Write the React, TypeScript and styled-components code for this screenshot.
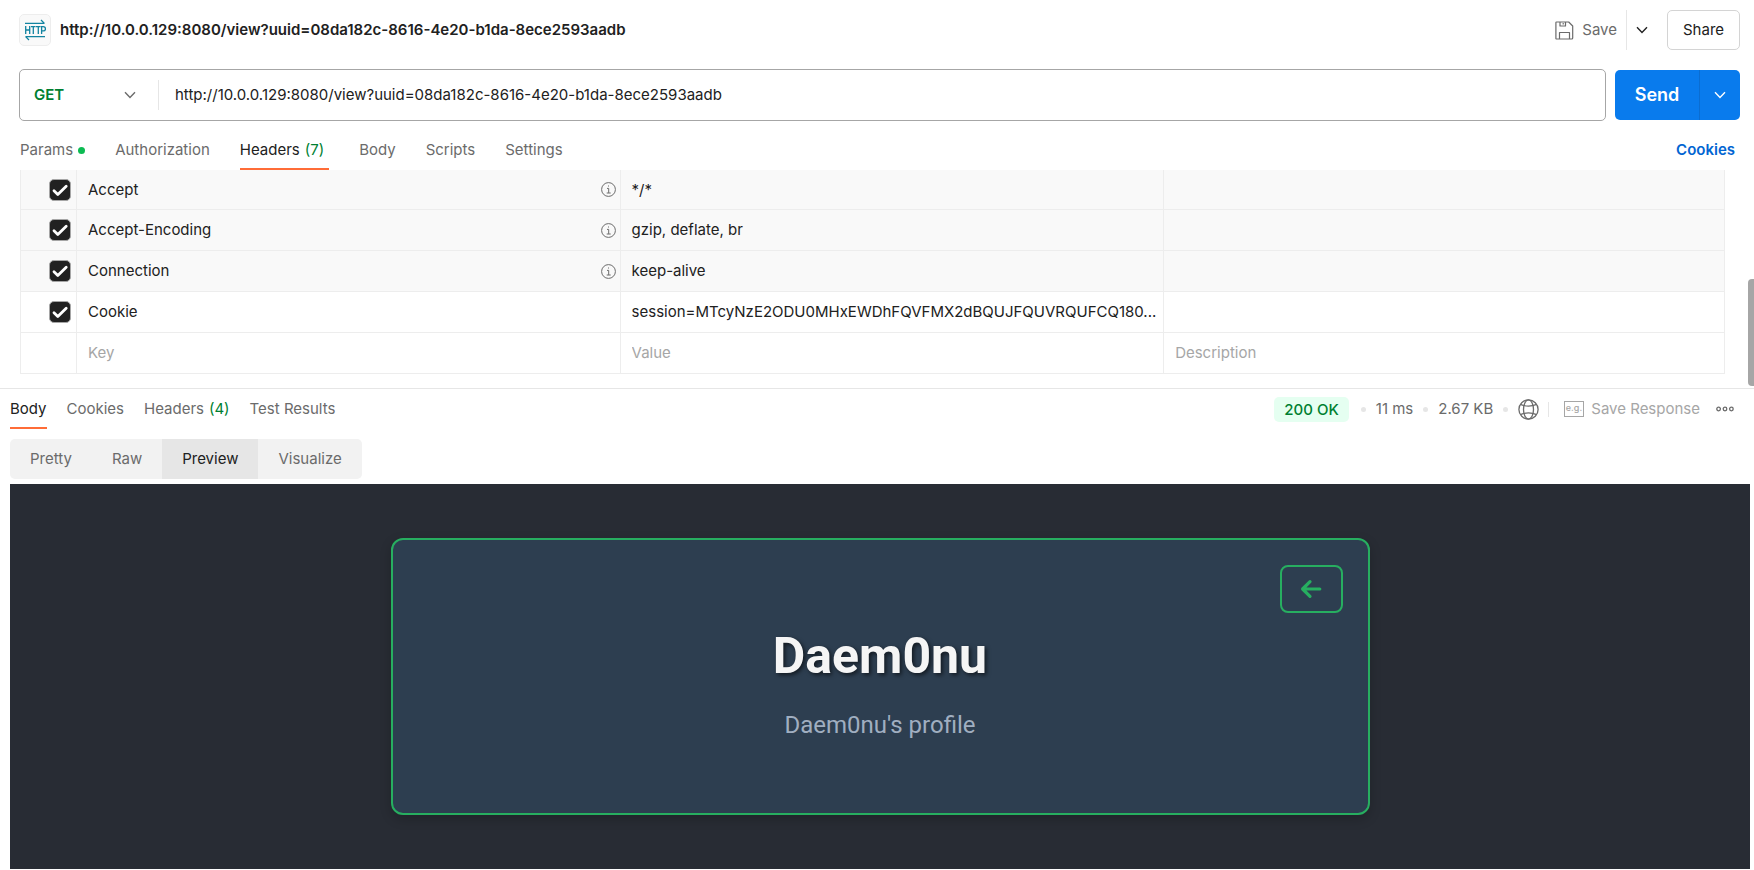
import React from "react";
import styled, { createGlobalStyle, css } from "styled-components";

const url = "http://10.0.0.129:8080/view?uuid=08da182c-8616-4e20-b1da-8ece2593aadb";

const c = {
  text: "#212121",
  muted: "#6b6b6b",
  faint: "#a6a6a6",
  line: "#e6e6e6",
  hairline: "#ededed",
  green: "#007f31",
  dot: "#0cbb52",
  orange: "#ff6c37",
  blue: "#097bed",
  link: "#0265d2",
};

const GlobalStyle = createGlobalStyle`
  * { box-sizing: border-box; }
  body {
    margin: 0;
    background: #fff;
    color: ${c.text};
    font: 400 15px/20px Inter, "Liberation Sans", sans-serif;
  }
  button, input, select { font: inherit; color: inherit; }
  button { margin: 0; padding: 0; border: 0; background: none; cursor: pointer; }
`;

const Page = styled.div`
  display: flex;
  flex-direction: column;
  min-height: 100vh;
`;

/* Request title bar */
const TitleBar = styled.header`
  display: flex;
  align-items: center;
  padding: 10px 14px 0 19px;
`;
const ProtocolBadge = styled.span`
  display: grid;
  place-items: center;
  width: 32px;
  height: 32px;
  margin-right: 9px;
  border: 1px solid ${c.hairline};
  border-radius: 5px;
  background: #f9f9f9;
`;
const RequestName = styled.h1`
  flex: 1;
  margin: 0;
  font-size: 15px;
  line-height: 20px;
  font-weight: 600;
`;
const SaveButton = styled.button`
  display: flex;
  align-items: center;
  gap: 8px;
  height: 40px;
  padding-right: 9px;
  color: ${c.muted};
`;
const SaveMenuButton = styled.button`
  display: grid;
  place-items: center;
  width: 31px;
  height: 40px;
  margin-right: 10px;
  border-left: 1px solid ${c.line};
`;
const ShareButton = styled.button`
  width: 73px;
  height: 40px;
  border: 1px solid #d4d4d4;
  border-radius: 5px;
`;

/* Address row */
const AddressRow = styled.form`
  display: flex;
  align-items: center;
  gap: 9px;
  padding: 19px 14px 0 19px;
`;
const AddressBox = styled.div`
  display: flex;
  align-items: center;
  flex: 1;
  height: 52px;
  border: 1px solid ${c.faint};
  border-radius: 5px;
`;
const MethodField = styled.label`
  display: grid;
  align-items: center;
  width: 139px;
  height: 30px;
  border-right: 1px solid ${c.line};
  > * { grid-area: 1 / 1; }
  svg { justify-self: end; margin-right: 22px; color: ${c.muted}; pointer-events: none; }
`;
const MethodSelect = styled.select`
  appearance: none;
  width: 100%;
  height: 30px;
  padding: 0 0 0 14px;
  border: 0;
  background: none;
  color: ${c.green};
  font-weight: 600;
`;
const UrlInput = styled.input`
  flex: 1;
  min-width: 0;
  padding: 0 16px;
  border: 0;
  outline: 0;
  background: none;
`;
const SendGroup = styled.div`
  display: flex;
  height: 50px;
  border-radius: 5px;
  overflow: hidden;
  background: ${c.blue};
  color: #fff;
`;
const SendButton = styled.button`
  width: 84px;
  font-size: 18px;
  font-weight: 600;
`;
const SendMenuButton = styled.button`
  display: grid;
  place-items: center;
  width: 41px;
  border-left: 1px solid #0a6dd2;
`;

/* Tabs */
const RequestTabs = styled.nav`
  display: flex;
  align-items: flex-end;
  gap: 30px;
  height: 49px;
  padding: 0 19px 0 20px;
`;
const Tab = styled.button<{ $active?: boolean; $wide?: boolean }>`
  display: flex;
  align-items: center;
  gap: 5px;
  height: 40px;
  padding-top: 2px;
  padding-right: ${(p) => (p.$wide ? "5px" : 0)};
  border-bottom: 2px solid ${(p) => (p.$active ? c.orange : "transparent")};
  color: ${(p) => (p.$active ? c.text : c.muted)};
`;
const Count = styled.span`
  color: ${c.green};
`;
const Dot = styled.span<{ $color: string; $size: number }>`
  flex: none;
  width: ${(p) => p.$size}px;
  height: ${(p) => p.$size}px;
  border-radius: 50%;
  background: ${(p) => p.$color};
`;
const CookiesLink = styled.a`
  margin-left: auto;
  padding-bottom: 10px;
  color: ${c.link};
  font-weight: 600;
  text-decoration: none;
`;

/* Headers table */
const HeadersPanel = styled.section`
  position: relative;
  padding: 0 29px 14px 20px;
  border-bottom: 1px solid ${c.line};
`;
const ScrollThumb = styled.div`
  position: absolute;
  right: 0;
  bottom: 2px;
  width: 6px;
  height: 107px;
  border-radius: 4px 0 0 4px;
  background: ${c.faint};
`;
const Table = styled.table`
  width: 100%;
  table-layout: fixed;
  border-collapse: separate;
  border-spacing: 0;
  border-left: 1px solid ${c.hairline};
`;
const Row = styled.tr<{ $auto?: boolean }>`
  height: 41px;
  background: ${(p) => (p.$auto ? "#f9f9f9" : "#fff")};
  &:first-child { height: 40px; }
`;
const Cell = styled.td`
  padding: 0 4px 0 11px;
  border-right: 1px solid ${c.hairline};
  border-bottom: 1px solid ${c.hairline};
  overflow: hidden;
  text-overflow: ellipsis;
  white-space: nowrap;
`;
const CheckCell = styled(Cell)`
  padding: 0 5px 0 0;
`;
const KeyContent = styled.div`
  display: flex;
  align-items: center;
  justify-content: space-between;
`;
const CheckLabel = styled.label`
  display: grid;
  justify-content: end;
  > * { grid-area: 1 / 1; }
  svg { pointer-events: none; }
`;
const Checkbox = styled.input`
  appearance: none;
  width: 22px;
  height: 22px;
  margin: 0;
  border: 1px solid ${c.faint};
  border-radius: 5px;
  &:checked { background: ${c.text}; }
`;
const CellInput = styled.input`
  display: block;
  width: 100%;
  padding: 0;
  border: 0;
  outline: 0;
  background: none;
  &::placeholder { color: ${c.faint}; opacity: 1; }
`;

/* Response */
const ResponseBar = styled.div`
  display: flex;
  align-items: center;
  justify-content: space-between;
  height: 40px;
  padding: 0 20px 0 10px;
`;
const ResponseTabs = styled.nav`
  display: flex;
  gap: 20px;
`;
const Meta = styled.div`
  display: flex;
  align-items: center;
  color: ${c.muted};
`;
const Status = styled.span`
  padding: 3px 10px 2px;
  border-radius: 5px;
  background: #e5fff1;
  color: ${c.green};
  font-weight: 500;
`;
const Stats = styled.div`
  display: flex;
  align-items: center;
  gap: 10px;
  padding: 0 10px 0 12px;
`;
const MetaDivider = styled.span`
  width: 1px;
  height: 15px;
  margin: 0 15px 0 9px;
  background: ${c.line};
`;
const SaveResponse = styled.button`
  display: flex;
  align-items: center;
  gap: 7px;
  margin-right: 16px;
  color: ${c.faint};
`;
const IconButton = styled.button`
  display: grid;
  place-items: center;
`;
const ModeGroup = styled.div`
  display: flex;
  align-self: flex-start;
  margin: 10px 0 5px 10px;
  border-radius: 5px;
  overflow: hidden;
  background: #f2f2f2;
`;
const ModeButton = styled.button<{ $active?: boolean }>`
  height: 40px;
  padding: 0 20px;
  color: ${c.muted};
  ${(p) => p.$active && css`
    background: #e6e6e6;
    color: ${c.text};
  `}
`;

/* Rendered preview */
const Preview = styled.main`
  display: flex;
  align-items: flex-start;
  justify-content: center;
  flex: 1;
  margin: 0 4px 1px 10px;
  padding: 54px 24px;
  background: #282c34;
  font-family: Roboto, "Liberation Sans", sans-serif;
`;
const ProfileCard = styled.article`
  position: relative;
  width: 100%;
  max-width: 979px;
  padding: 90px 40px 73px;
  border: 2px solid #27ae60;
  border-radius: 12px;
  background: #2d3e50;
  box-shadow: 0 4px 12px rgba(0, 0, 0, 0.2);
  text-align: center;
`;
const BackButton = styled.button`
  position: absolute;
  top: 25px;
  right: 25px;
  display: grid;
  place-items: center;
  width: 63px;
  height: 48px;
  border: 2px solid #27ae60;
  border-radius: 8px;
  color: #27ae60;
`;
const ProfileName = styled.h2`
  margin: 0;
  color: #f5f5f5;
  font-size: 50px;
  line-height: 52px;
  font-weight: 700;
  text-shadow: 2px 2px 4px rgba(0, 0, 0, 0.6);
`;
const ProfileText = styled.p`
  margin: 28px 0 0;
  color: #a0aec0;
  font-size: 24px;
  line-height: 30px;
`;

const Chevron = () => (
  <svg width="12" height="8" viewBox="0 0 12 8" fill="none" stroke="currentColor" strokeWidth="1.4" aria-hidden="true">
    <path d="M1 1.2 6 6.4 11 1.2" />
  </svg>
);

const HttpIcon = () => (
  <svg width="22" height="22" viewBox="0 0 22 22" fill="none" stroke="#1283a0" strokeWidth="1.3" aria-hidden="true">
    <path d="M1 4.4H20.500M17 1l3.400 3.400" />
    <path d="M21 17.600H1.500M5 21l-3.400-3.400" />
    <path d="M1.700 7v8M5.700 7v8M1.700 11h4M7 7.600h4.600M9.300 7.600V15M12 7.600h4.600M14.300 7.600V15M17.600 15V7.600h1.700a2 2 0 0 1 0 4.300h-1.700" />
  </svg>
);

const SaveIcon = () => (
  <svg width="19" height="19" viewBox="0 0 19 19" fill="none" stroke="currentColor" strokeWidth="1.2" strokeLinejoin="round" aria-hidden="true">
    <path d="M1.500 1h12.200l4 4v12a1 1 0 0 1-1 1H1.500a.6.6 0 0 1-.6-.6V1.600a.6.6 0 0 1 .6-.6Z" />
    <path d="M5 1v4h5.500V1M8.200 2v1.600M4.500 18v-6.500h10V18" />
  </svg>
);

const InfoIcon = () => (
  <svg width="15" height="15" viewBox="0 0 15 15" fill="none" stroke={c.muted} aria-hidden="true">
    <circle cx="7.500" cy="7.500" r="6.900" />
    <path d="M6 6.400h1.700v4.500M5.700 11h4M7 4h1" />
  </svg>
);

const CheckIcon = () => (
  <svg width="22" height="22" viewBox="0 0 22 22" fill="none" stroke="#fff" strokeWidth="2.800" strokeLinecap="round" strokeLinejoin="round" aria-hidden="true">
    <path d="m5 11.800 3.800 3.700 8.400-8.300" />
  </svg>
);

const GlobeIcon = () => (
  <svg width="21" height="21" viewBox="0 0 21 21" fill="none" stroke={c.muted} strokeWidth="1.300" aria-hidden="true">
    <circle cx="10.500" cy="10.500" r="9.600" />
    <ellipse cx="10.500" cy="10.500" rx="5" ry="9.600" />
    <path d="M2.300 5.400Q10.500 8.800 18.700 5.400M2.300 15.600Q10.500 12.200 18.700 15.600" />
  </svg>
);

const ExampleIcon = () => (
  <svg width="20" height="16" viewBox="0 0 20 16" aria-hidden="true">
    <rect x=".5" y=".5" width="19" height="15" fill="none" stroke="currentColor" />
    <text x="10" y="10" textAnchor="middle" fontSize="9" fontWeight="500" fill="currentColor">e.g.</text>
  </svg>
);

const MoreIcon = () => (
  <svg width="18" height="6" viewBox="0 0 18 6" fill="none" stroke={c.muted} strokeWidth="1.300" aria-hidden="true">
    <circle cx="2.600" cy="3" r="1.800" />
    <circle cx="9" cy="3" r="1.800" />
    <circle cx="15.400" cy="3" r="1.800" />
  </svg>
);

const BackIcon = () => (
  <svg width="22" height="20" viewBox="0 0 22 20" fill="none" stroke="currentColor" strokeWidth="3.200" strokeLinecap="round" strokeLinejoin="round" aria-hidden="true">
    <path d="M19.800 10H3M10 2.600 2.600 10l7.400 7.400" />
  </svg>
);

const headers = [
  { name: "Accept", value: "*/*", auto: true },
  { name: "Accept-Encoding", value: "gzip, deflate, br", auto: true },
  { name: "Connection", value: "keep-alive", auto: true },
  { name: "Cookie", value: "session=MTcyNzE2ODU0MHxEWDhFQVFMX2dBQUJFQUVRQUFCQ180...", auto: false },
];

export default function App() {
  return (
    <Page>
      <GlobalStyle />
      <TitleBar>
        <ProtocolBadge><HttpIcon /></ProtocolBadge>
        <RequestName>{url}</RequestName>
        <SaveButton type="button"><SaveIcon />Save</SaveButton>
        <SaveMenuButton type="button" aria-label="Save options"><Chevron /></SaveMenuButton>
        <ShareButton type="button">Share</ShareButton>
      </TitleBar>

      <AddressRow onSubmit={(e) => e.preventDefault()}>
        <AddressBox>
          <MethodField>
            <MethodSelect aria-label="Method" defaultValue="GET">
              <option>GET</option>
              <option>POST</option>
              <option>PUT</option>
              <option>DELETE</option>
            </MethodSelect>
            <Chevron />
          </MethodField>
          <UrlInput aria-label="Request URL" defaultValue={url} />
        </AddressBox>
        <SendGroup>
          <SendButton type="submit">Send</SendButton>
          <SendMenuButton type="button" aria-label="Send options"><Chevron /></SendMenuButton>
        </SendGroup>
      </AddressRow>

      <RequestTabs>
        <Tab type="button">Params<Dot $color={c.dot} $size={7} /></Tab>
        <Tab type="button">Authorization</Tab>
        <Tab type="button" $active $wide>Headers <Count>(7)</Count></Tab>
        <Tab type="button">Body</Tab>
        <Tab type="button">Scripts</Tab>
        <Tab type="button">Settings</Tab>
        <CookiesLink href="#cookies">Cookies</CookiesLink>
      </RequestTabs>

      <HeadersPanel>
        <Table aria-label="Request headers">
          <colgroup>
            <col style={{ width: 56 }} />
            <col style={{ width: "31.9%" }} />
            <col style={{ width: "31.9%" }} />
            <col />
          </colgroup>
          <tbody>
            {headers.map((h) => (
              <Row key={h.name} $auto={h.auto}>
                <CheckCell>
                  <CheckLabel>
                    <Checkbox type="checkbox" defaultChecked aria-label={`Send ${h.name}`} />
                    <CheckIcon />
                  </CheckLabel>
                </CheckCell>
                <Cell>
                  <KeyContent>{h.name}{h.auto && <InfoIcon />}</KeyContent>
                </Cell>
                <Cell>{h.value}</Cell>
                <Cell />
              </Row>
            ))}
            <Row>
              <CheckCell />
              <Cell><CellInput aria-label="Key" placeholder="Key" /></Cell>
              <Cell><CellInput aria-label="Value" placeholder="Value" /></Cell>
              <Cell><CellInput aria-label="Description" placeholder="Description" /></Cell>
            </Row>
          </tbody>
        </Table>
        <ScrollThumb />
      </HeadersPanel>

      <ResponseBar>
        <ResponseTabs>
          <Tab type="button" $active>Body</Tab>
          <Tab type="button">Cookies</Tab>
          <Tab type="button">Headers <Count>(4)</Count></Tab>
          <Tab type="button">Test Results</Tab>
        </ResponseTabs>
        <Meta>
          <Status>200 OK</Status>
          <Stats>
            <Dot $color={c.line} $size={5} />
            <span>11 ms</span>
            <Dot $color={c.line} $size={5} />
            <span>2.67 KB</span>
            <Dot $color={c.line} $size={5} />
          </Stats>
          <IconButton type="button" aria-label="Network details"><GlobeIcon /></IconButton>
          <MetaDivider />
          <SaveResponse type="button"><ExampleIcon />Save Response</SaveResponse>
          <IconButton type="button" aria-label="More actions"><MoreIcon /></IconButton>
        </Meta>
      </ResponseBar>

      <ModeGroup>
        <ModeButton type="button">Pretty</ModeButton>
        <ModeButton type="button">Raw</ModeButton>
        <ModeButton type="button" $active>Preview</ModeButton>
        <ModeButton type="button">Visualize</ModeButton>
      </ModeGroup>

      <Preview>
        <ProfileCard>
          <BackButton type="button" aria-label="Back"><BackIcon /></BackButton>
          <ProfileName>Daem0nu</ProfileName>
          <ProfileText>Daem0nu's profile</ProfileText>
        </ProfileCard>
      </Preview>
    </Page>
  );
}
